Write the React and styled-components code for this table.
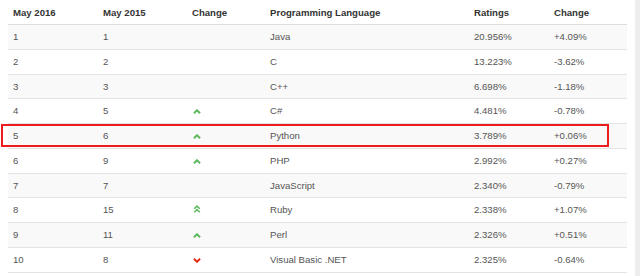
import React from "react";
import styled, { createGlobalStyle } from "styled-components";

const Global = createGlobalStyle`
  html, body { margin: 0; padding: 0; background: #fff; }
  body { font-family: "Liberation Sans", Arial, sans-serif; }
`;

const Page = styled.div`
  display: flex;
  width: 640px;
  height: 276px;
  overflow: hidden;
`;

const Main = styled.div`
  position: relative;
  flex: 1;
  padding: 0 8px 0 8px;
`;

const Strip = styled.div`
  width: 5px;
  background: #eeeeee;
`;

const Table = styled.table`
  width: 619px;
  border-collapse: collapse;
  table-layout: fixed;
  font-size: 9.6px;
`;

const Th = styled.th`
  text-align: left;
  font-weight: bold;
  color: #333;
  height: 24px;
  padding: 0 5px;
  border-bottom: 1.5px solid #dddddd;
  width: ${(p) => p.$w - 10}px;
`;

const Tr = styled.tr`
  background: ${(p) => (p.$odd ? "#f9f9f9" : "#fff")};
`;

const Td = styled.td`
  height: 23.75px;
  padding: 0 5px;
  color: #555;
  border-bottom: 1px solid #e4e4e4;
  vertical-align: middle;
  line-height: 1;
`;

const Highlight = styled.div`
  position: absolute;
  left: 1px;
  top: 124px;
  width: 604px;
  height: 19px;
  border: 2px solid #ee1c1c;
  pointer-events: none;
`;

const IconWrap = styled.span`
  display: inline-flex;
  align-items: center;
  padding-left: 0.5px;
`;

const Up = () => (
  <svg width="8" height="5" viewBox="0 0 8 5">
    <polyline points="0.9,4.2 4,1.2 7.1,4.2" fill="none" stroke="#5cb85c" strokeWidth="1.9" />
  </svg>
);

const DoubleUp = () => (
  <svg width="8" height="8" viewBox="0 0 8 8">
    <polyline points="1.2,3.8 4,1.1 6.8,3.8" fill="none" stroke="#5cb85c" strokeWidth="1.5" />
    <polyline points="1.2,7.3 4,4.6 6.8,7.3" fill="none" stroke="#5cb85c" strokeWidth="1.5" />
  </svg>
);

const Down = () => (
  <svg width="8" height="5" viewBox="0 0 8 5">
    <polyline points="0.9,0.8 4,3.8 7.1,0.8" fill="none" stroke="#e2260f" strokeWidth="1.9" />
  </svg>
);

const rows = [
  [1, 1, null, "Java", "20.956%", "+4.09%"],
  [2, 2, null, "C", "13.223%", "-3.62%"],
  [3, 3, null, "C++", "6.698%", "-1.18%"],
  [4, 5, "up", "C#", "4.481%", "-0.78%"],
  [5, 6, "up", "Python", "3.789%", "+0.06%"],
  [6, 9, "up", "PHP", "2.992%", "+0.27%"],
  [7, 7, null, "JavaScript", "2.340%", "-0.79%"],
  [8, 15, "up2", "Ruby", "2.338%", "+1.07%"],
  [9, 11, "up", "Perl", "2.326%", "+0.51%"],
  [10, 8, "down", "Visual Basic .NET", "2.325%", "-0.64%"],
];

const icon = (t) =>
  t === "up" ? <Up /> : t === "up2" ? <DoubleUp /> : t === "down" ? <Down /> : null;

export default function App() {
  return (
    <>
      <Global />
      <Page>
        <Main>
          <Table>
            <thead>
              <tr>
                <Th $w={90}>May 2016</Th>
                <Th $w={89}>May 2015</Th>
                <Th $w={78}>Change</Th>
                <Th $w={204}>Programming Language</Th>
                <Th $w={80}>Ratings</Th>
                <Th $w={78}>Change</Th>
              </tr>
            </thead>
            <tbody>
              {rows.map((r, i) => (
                <Tr key={r[0]} $odd={i % 2 === 0}>
                  <Td>{r[0]}</Td>
                  <Td>{r[1]}</Td>
                  <Td>{r[2] && <IconWrap>{icon(r[2])}</IconWrap>}</Td>
                  <Td>{r[3]}</Td>
                  <Td>{r[4]}</Td>
                  <Td>{r[5]}</Td>
                </Tr>
              ))}
            </tbody>
          </Table>
          <Highlight />
        </Main>
        <Strip />
      </Page>
    </>
  );
}
